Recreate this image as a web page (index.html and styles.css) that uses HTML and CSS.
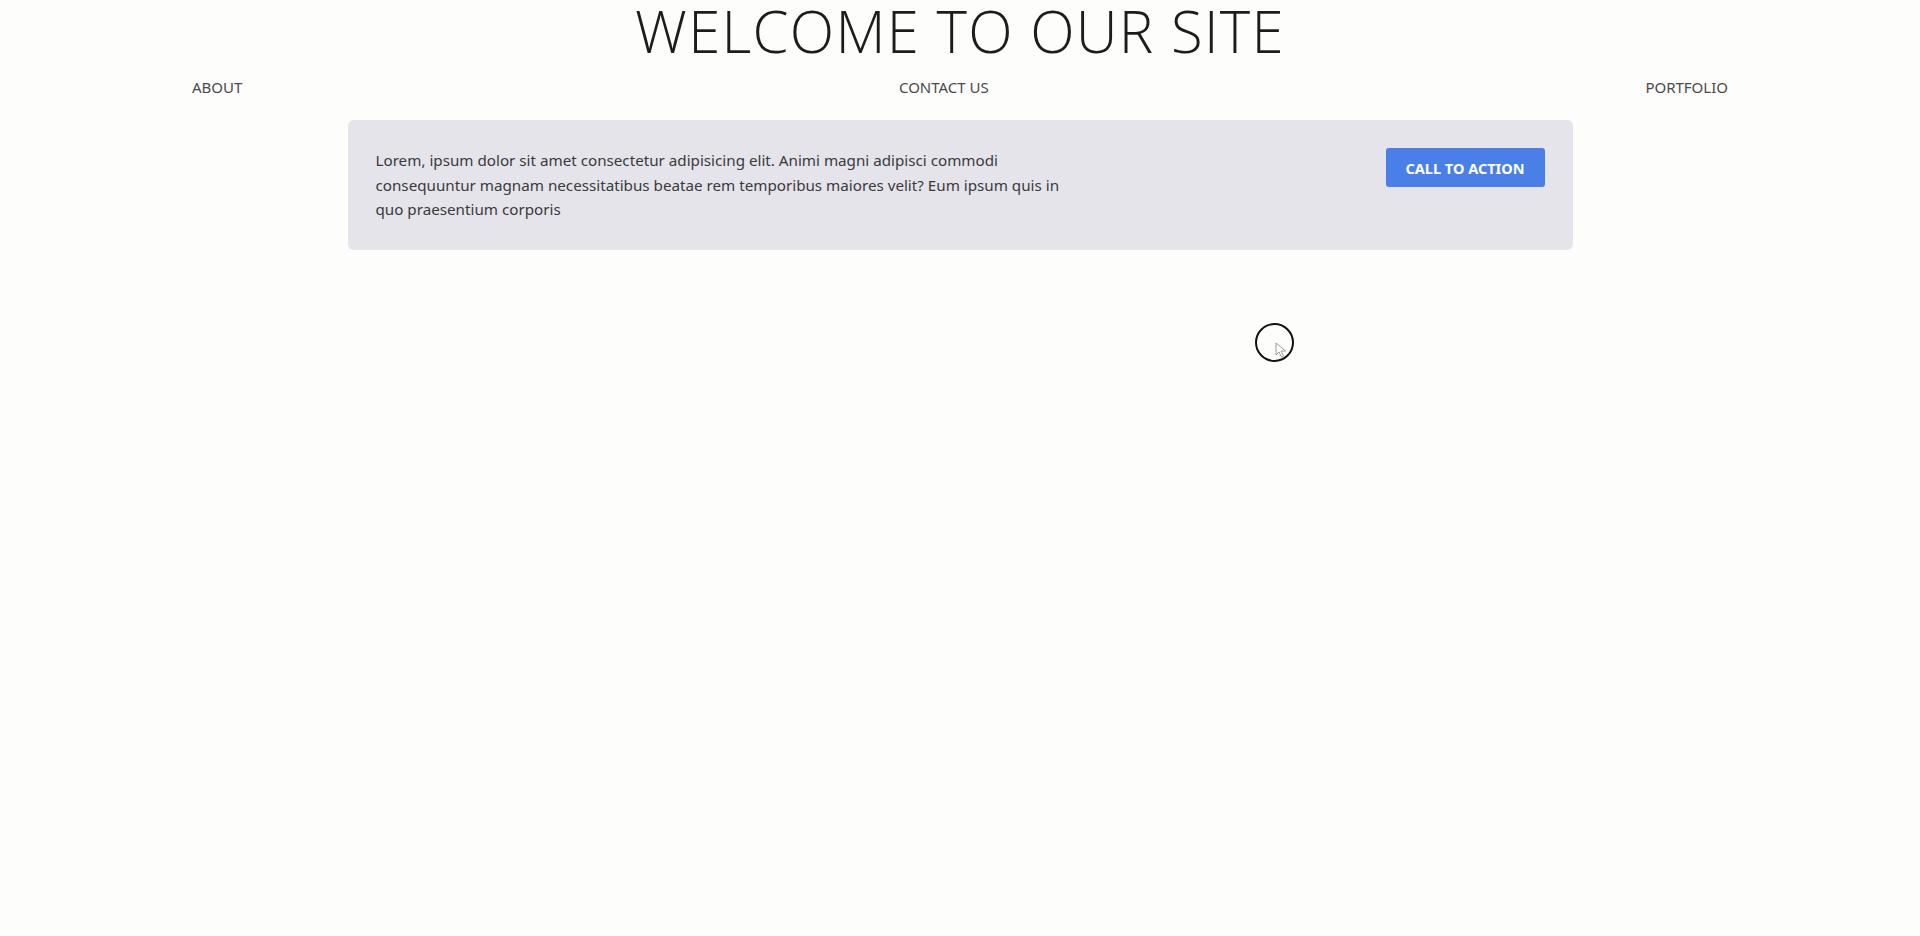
FILE: index.html
```html
<!DOCTYPE html>
<html lang="en">
<head>
<meta charset="utf-8">
<title>Welcome</title>
<link rel="stylesheet" href="styles.css">
</head>
<body>
  <header class="site-header">
    <h1 class="title">WELCOME TO OUR SITE</h1>
    <nav class="nav">
      <a class="nav-link" href="#">ABOUT</a>
      <a class="nav-link" href="#">CONTACT US</a>
      <a class="nav-link" href="#">PORTFOLIO</a>
    </nav>
  </header>
  <main class="main">
    <section class="cta-box">
      <p class="cta-text">Lorem, ipsum dolor sit amet consectetur adipisicing elit. Animi magni adipisci commodi consequuntur magnam necessitatibus beatae rem temporibus maiores velit? Eum ipsum quis in quo praesentium corporis</p>
      <button class="cta-btn">CALL TO ACTION</button>
    </section>
  </main>
  <div class="cursor-ring"></div>
  <svg class="cursor-arrow" width="12" height="16" viewBox="0 0 12 16"><path d="M1 1 L1 13 L4 10 L6.5 15 L8.5 14 L6 9 L10.5 9 Z" fill="#fff" stroke="#9a9a9a" stroke-width="1"/></svg>
</body>
</html>
```
FILE: styles.css
```css
html, body {
  margin: 0;
  padding: 0;
}
body {
  background: #fdfdfb;
  font-family: "Noto Sans", "Open Sans", sans-serif;
  color: #222;
  min-height: 936px;
  position: relative;
}
.site-header {
  display: flex;
  flex-direction: column;
  align-items: center;
}
.title {
  margin: 0;
  font-family: "Open Sans", sans-serif;
  font-weight: 300;
  font-size: 58px;
  line-height: 62px;
  letter-spacing: 1.3px;
  color: #1c1c1c;
}
.nav {
  align-self: stretch;
  display: flex;
  justify-content: space-between;
  padding: 13px 10% 0;
}
.nav-link {
  font-size: 15px;
  line-height: 24px;
  color: #4a4a4a;
  text-decoration: none;
}
.main {
  display: flex;
  justify-content: center;
  padding-top: 21px;
}
.cta-box {
  width: 1225px;
  box-sizing: border-box;
  background: #e4e4ea;
  border-radius: 6px;
  padding: 28px;
  display: flex;
  justify-content: space-between;
  align-items: flex-start;
}
.cta-text {
  margin: 0;
  max-width: 700px;
  font-size: 15.2px;
  line-height: 24.5px;
  color: #3a3a3a;
}
.cta-btn {
  border: none;
  background: #4a7fe8;
  color: #fff;
  font-family: "Noto Sans", sans-serif;
  font-weight: 700;
  font-size: 14.5px;
  height: 39px;
  width: 159px;
  border-radius: 3px;
  padding: 0;
}
.cursor-ring {
  position: absolute;
  left: 1255px;
  top: 323px;
  width: 35px;
  height: 35px;
  border: 2px solid #111;
  border-radius: 50%;
}
.cursor-arrow {
  position: absolute;
  left: 1275px;
  top: 342px;
}
```
